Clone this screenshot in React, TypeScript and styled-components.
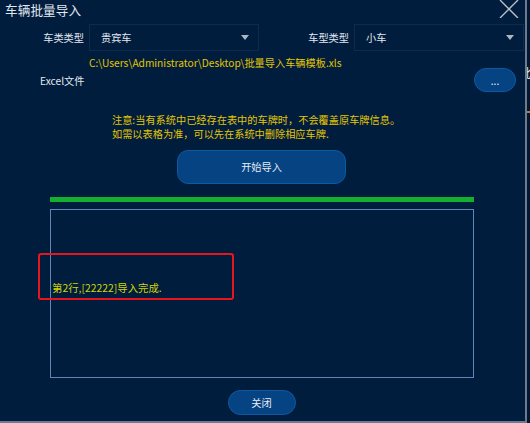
import * as React from "react";
import styled, { createGlobalStyle } from "styled-components";

const GlobalStyle = createGlobalStyle`
  html, body {
    margin: 0;
    padding: 0;
    background: #04172f;
  }
  body {
    font-family: "Noto Sans CJK SC", "Noto Sans", sans-serif;
  }
`;

const Page = styled.div`
  display: flex;
  width: 530px;
  height: 423px;
  overflow: hidden;
`;

const Dialog = styled.div`
  position: relative;
  box-sizing: border-box;
  width: 527px;
  height: 423px;
  flex: none;
  background: #001d3e;
  border-right: 2px solid #6b7a90;
  border-bottom: 2px solid #6b7a90;
  display: flex;
  flex-direction: column;
  color: #e2e8f0;
`;

// strip of the window behind the dialog
const Behind = styled.div`
  flex: 1;
  overflow: hidden;
  padding-top: 66px;
  color: #dfe6ee;
  font-size: 12px;
  line-height: 14px;
  span {
    margin-left: -8px;
  }
`;

const BehindMark = styled.div`
  margin-top: 31px;
  width: 3px;
  height: 2px;
  background: #c07a30;
`;

const TitleBar = styled.div`
  height: 20px;
  display: flex;
  align-items: flex-start;
  justify-content: space-between;
  padding-left: 5px;
  padding-right: 6px;
`;

const Title = styled.div`
  font-size: 12.6px;
  line-height: 20px;
  letter-spacing: 0.1px;
`;

const CloseIcon = styled.svg`
  width: 20px;
  height: 18px;
  display: block;
`;

const FormRow = styled.div`
  margin-top: 4px;
  display: flex;
  align-items: center;
  height: 27px;
`;

const Label = styled.div<{ $width: number }>`
  width: ${(p) => p.$width}px;
  flex: none;
  text-align: right;
  padding-right: 5px;
  box-sizing: border-box;
  font-size: 10.2px;
`;

const Select = styled.div`
  box-sizing: border-box;
  width: 170px;
  height: 27px;
  border: 1px solid #0e2b4d;
  display: flex;
  align-items: center;
  justify-content: space-between;
  padding: 0 9px 0 11px;
  font-size: 10.2px;
`;

const Caret = styled.span`
  width: 0;
  height: 0;
  border-left: 4px solid transparent;
  border-right: 4px solid transparent;
  border-top: 5px solid #aeb6c2;
`;

const PathLine = styled.div`
  margin-top: 5px;
  padding-left: 89px;
  height: 14px;
  line-height: 14px;
  font-size: 10.2px;
  color: #e4c600;
  white-space: nowrap;
`;

const FileRow = styled.div`
  margin-top: -2px;
  height: 24px;
  display: flex;
  align-items: center;
  justify-content: space-between;
  padding-left: 40px;
  padding-right: 9px;
  font-size: 10.2px;
`;

const PillButton = styled.button<{ $w: number; $h: number; $radius: number }>`
  box-sizing: border-box;
  width: ${(p) => p.$w}px;
  height: ${(p) => p.$h}px;
  border-radius: ${(p) => p.$radius}px;
  background: #064382;
  border: 1.5px solid #0f58a2;
  color: #e6ecf4;
  font-family: inherit;
  font-size: 10.2px;
  padding: 0;
  flex: none;
  cursor: pointer;
`;

const Notice = styled.div`
  margin-top: 21px;
  padding-left: 112px;
  font-size: 10.2px;
  line-height: 14px;
  color: #e4c600;
  white-space: nowrap;
`;

const Center = styled.div<{ $mt: number }>`
  margin-top: ${(p) => p.$mt}px;
  display: flex;
  justify-content: center;
  padding-right: 2px;
`;

const Progress = styled.div`
  margin: 13px 0 0 50px;
  width: 424px;
  height: 5px;
  background: #12b02e;
`;

const LogBox = styled.div`
  box-sizing: border-box;
  margin: 7px 0 0 50px;
  width: 424px;
  height: 169px;
  border: 1px solid #5f86b6;
  padding: 71px 0 0 1px;
  font-size: 10.4px;
  line-height: 14px;
  color: #d4d400;
`;

const Highlight = styled.div`
  position: absolute;
  left: 38px;
  top: 253px;
  width: 196px;
  height: 47px;
  box-sizing: border-box;
  border: 2px solid #e8161c;
  border-radius: 3px;
  pointer-events: none;
`;

export default function App() {
  return (
    <>
      <GlobalStyle />
      <Page>
        <Dialog>
          <TitleBar>
            <Title>车辆批量导入</Title>
            <CloseIcon viewBox="0 0 20 18">
              <path d="M1 0 L19 18 M19 0 L1 18" stroke="#b9c0ca" strokeWidth="1.4" />
            </CloseIcon>
          </TitleBar>

          <FormRow>
            <Label $width={89}>车类类型</Label>
            <Select>
              <span>贵宾车</span>
              <Caret />
            </Select>
            <Label $width={95}>车型类型</Label>
            <Select>
              <span>小车</span>
              <Caret />
            </Select>
          </FormRow>

          <PathLine>C:\Users\Administrator\Desktop\批量导入车辆模板.xls</PathLine>

          <FileRow>
            <span>Excel文件</span>
            <PillButton $w={42} $h={24} $radius={12}>...</PillButton>
          </FileRow>

          <Notice>
            注意:当有系统中已经存在表中的车牌时，不会覆盖原车牌信息。
            <br />
            如需以表格为准，可以先在系统中删除相应车牌.
          </Notice>

          <Center $mt={8.5}>
            <PillButton $w={169} $h={34} $radius={11}>开始导入</PillButton>
          </Center>

          <Progress />

          <LogBox>第2行,[22222]导入完成.</LogBox>

          <Center $mt={12}>
            <PillButton $w={68} $h={25} $radius={13}>关闭</PillButton>
          </Center>

          <Highlight />
        </Dialog>
        <Behind>
          <span>批</span>
          <BehindMark />
        </Behind>
      </Page>
    </>
  );
}
